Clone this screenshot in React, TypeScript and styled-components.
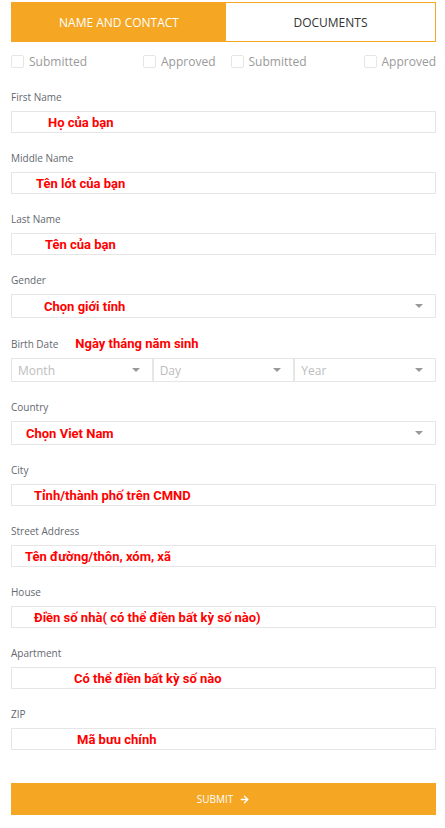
import React from "react";
import styled, { createGlobalStyle } from "styled-components";
import { ArrowRight } from "lucide-react";

const GlobalStyle = createGlobalStyle`
  body {
    margin: 0;
    background: #fff;
    font-family: "Open Sans", "Liberation Sans", sans-serif;
  }
`;

const Page = styled.div`
  width: 425px;
  padding: 2px 9px 13px 11px;
`;

const Tabs = styled.div`
  display: grid;
  grid-template-columns: 214px 1fr;
  height: 40px;
  border: 1px solid #f5a623;
  box-sizing: border-box;
`;

const Tab = styled.div<{ $active?: boolean }>`
  display: flex;
  align-items: center;
  justify-content: center;
  font-size: 12px;
  text-transform: uppercase;
  background: ${p => (p.$active ? "#f5a623" : "#fff")};
  color: ${p => (p.$active ? "#fff" : "#333")};
`;

const StatusRow = styled.div`
  display: grid;
  grid-template-columns: 1fr 1fr;
  margin: 11px 0 23px;
  height: 14px;
`;

const StatusHalf = styled.div<{ $side: "left" | "right" }>`
  display: flex;
  justify-content: space-between;
  align-items: center;
  padding: ${p => (p.$side === "left" ? "0 8px 0 0" : "0 0 0 7px")};
`;

const Check = styled.label`
  display: flex;
  align-items: center;
  gap: 5px;
  font-size: 12px;
  color: #9a9a9a;
`;

const Box = styled.span`
  width: 13px;
  height: 13px;
  border: 1px solid #e6e6e6;
  border-radius: 2px;
  box-sizing: border-box;
`;

const Field = styled.div`
  margin-bottom: 18px;
`;

const LabelRow = styled.div`
  display: flex;
  align-items: center;
  height: 15px;
  margin-bottom: 7px;
`;

const Label = styled.div`
  font-size: 10px;
  line-height: 14px;
  height: 14px;
  margin-bottom: 7px;
  color: #646870;
`;

const InlineLabel = styled(Label)`
  margin: 0;
`;

const Hint = styled.span<{ $indent?: number }>`
  font-family: Roboto, "Liberation Sans", sans-serif;
  font-weight: 700;
  font-size: 13px;
  color: #f00;
  padding-left: ${p => p.$indent ?? 0}px;
`;

const Input = styled.div`
  height: 22px;
  border: 1px solid #e6e6e6;
  box-sizing: border-box;
  display: flex;
  align-items: center;
`;

const Select = styled(Input)`
  height: 24px;
  justify-content: space-between;
  padding-right: 12px;
  &::after {
    content: "";
    border-left: 4px solid transparent;
    border-right: 4px solid transparent;
    border-top: 4px solid #999;
  }
`;

const DateRow = styled.div`
  display: grid;
  grid-template-columns: repeat(3, 1fr);
`;

const Placeholder = styled.span`
  font-size: 12px;
  color: #bdbdbd;
  padding-left: 6px;
`;

const Submit = styled.button`
  width: 100%;
  height: 32px;
  margin-top: 33px;
  border: none;
  background: #f5a623;
  color: #fff;
  font-family: "Open Sans", "Liberation Sans", sans-serif;
  font-size: 10px;
  display: flex;
  align-items: center;
  justify-content: center;
  gap: 6px;
`;

type TextFieldProps = { label: string; hint: string; indent: number };

const TextField = ({ label, hint, indent }: TextFieldProps) => (
  <Field>
    <Label>{label}</Label>
    <Input>
      <Hint $indent={indent - 12}>{hint}</Hint>
    </Input>
  </Field>
);

const SelectField = ({ label, hint, indent }: TextFieldProps) => (
  <Field>
    <Label>{label}</Label>
    <Select>
      <Hint $indent={indent - 12}>{hint}</Hint>
    </Select>
  </Field>
);

export default function App() {
  return (
    <Page>
      <GlobalStyle />
      <Tabs>
        <Tab $active>Name and contact</Tab>
        <Tab>Documents</Tab>
      </Tabs>
      <StatusRow>
        <StatusHalf $side="left">
          <Check><Box />Submitted</Check>
          <Check><Box />Approved</Check>
        </StatusHalf>
        <StatusHalf $side="right">
          <Check><Box />Submitted</Check>
          <Check><Box />Approved</Check>
        </StatusHalf>
      </StatusRow>

      <TextField label="First Name" hint="Họ của bạn" indent={48} />
      <TextField label="Middle Name" hint="Tên lót của bạn" indent={36} />
      <TextField label="Last Name" hint="Tên của bạn" indent={45} />
      <SelectField label="Gender" hint="Chọn giới tính" indent={44} />

      <Field>
        <LabelRow>
          <InlineLabel>Birth Date</InlineLabel>
          <Hint $indent={17}>Ngày tháng năm sinh</Hint>
        </LabelRow>
        <DateRow>
          {["Month", "Day", "Year"].map(p => (
            <Select key={p}>
              <Placeholder>{p}</Placeholder>
            </Select>
          ))}
        </DateRow>
      </Field>

      <SelectField label="Country" hint="Chọn Viet Nam" indent={26} />
      <TextField label="City" hint="Tỉnh/thành phố trên CMND" indent={34} />
      <TextField label="Street Address" hint="Tên đường/thôn, xóm, xã" indent={25} />
      <TextField label="House" hint="Điền số nhà( có thể điền bất kỳ số nào)" indent={34} />
      <TextField label="Apartment" hint="Có thể điền bất kỳ số nào" indent={74} />
      <TextField label="ZIP" hint="Mã bưu chính" indent={77} />

      <Submit>
        SUBMIT
        <ArrowRight size={11} strokeWidth={3} />
      </Submit>
    </Page>
  );
}
